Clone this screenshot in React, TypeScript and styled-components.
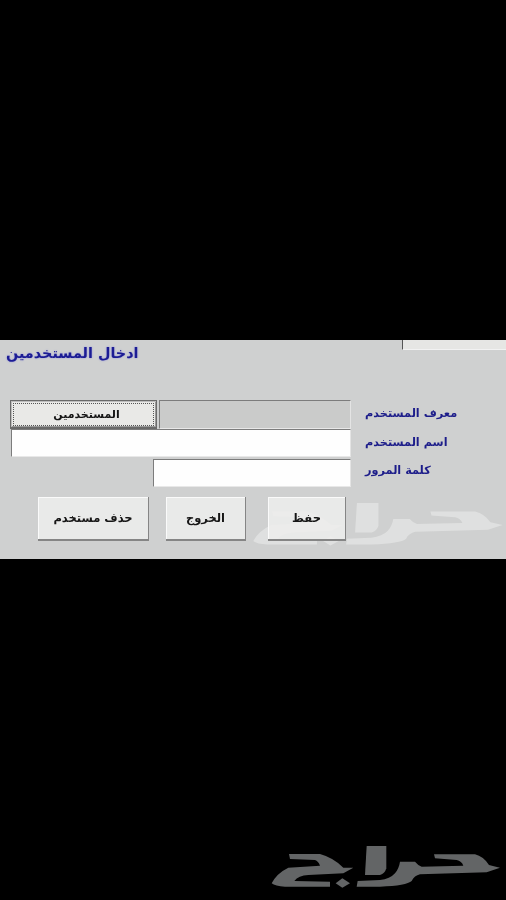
import React from "react";
import styled, { createGlobalStyle } from "styled-components";

const Global = createGlobalStyle`
  html, body { margin: 0; padding: 0; background: #000; }
  #root { width: 506px; height: 900px; overflow: hidden; }
`;

const Page = styled.div`
  position: relative;
  width: 506px;
  height: 900px;
  background: #000;
  display: flex;
  flex-direction: column;
  padding-top: 340px;
  box-sizing: border-box;
  font-family: "DejaVu Sans", "Noto Sans", sans-serif;
`;

const Panel = styled.section`
  position: relative;
  height: 219px;
  flex: none;
  background: #cfd0d0;
  box-sizing: border-box;
  overflow: hidden;
`;

const TopTab = styled.div`
  position: absolute;
  top: 0;
  right: 0;
  width: 104px;
  height: 10px;
  background: #e6e6e4;
  border-left: 1px solid #555;
  border-bottom: 1px solid #f2f2f2;
  box-sizing: border-box;
`;

const Title = styled.h1`
  margin: 0;
  height: 60px;
  box-sizing: border-box;
  padding: 3px 0 0 6px;
  direction: rtl;
  width: 140px;
  font-size: 14.4px;
  line-height: 21px;
  font-weight: 700;
  color: #1c1c94;
  white-space: nowrap;
  display: flex;
  justify-content: flex-end;
  text-shadow: 0 0 2px #8f90d8;
  filter: blur(0.4px);
`;

const Form = styled.div`
  display: grid;
  grid-template-columns: 351px 1fr;
  grid-template-rows: 29px 28px 30px;
`;

const FieldRow = styled.div<{ $indent: number; $top?: number }>`
  display: flex;
  padding-left: ${(p) => p.$indent}px;
  padding-top: ${(p) => p.$top ?? 0}px;
  gap: 2px;
  align-items: stretch;
`;

const UsersButton = styled.button`
  width: 147px;
  flex: none;
  padding: 0 0 0 6px;
  background: #e9e9e7;
  border: 1px solid #6a6a6a;
  border-bottom-width: 2px;
  outline: 1px dotted #555;
  outline-offset: -4px;
  box-shadow: inset 1px 1px 0 #bdbdbd, inset -1px -1px 0 #9a9a9a;
  font: 700 11px "DejaVu Sans", sans-serif;
  color: #141414;
  direction: rtl;
  filter: blur(0.3px);
`;

const TextField = styled.div<{ $disabled?: boolean }>`
  flex: 1;
  background: ${(p) => (p.$disabled ? "#cacbca" : "#fefefe")};
  border-top: 1px solid #7c7c7c;
  border-left: 1px solid #7c7c7c;
  border-right: 1px solid #e4e4e4;
  border-bottom: 1px solid #e8e8e8;
  box-sizing: border-box;
  filter: blur(0.3px);
`;

const Label = styled.label`
  padding: 4px 0 0 14px;
  direction: rtl;
  display: flex;
  justify-content: flex-end;
  width: fit-content;
  font-size: 11.3px;
  line-height: 20px;
  font-weight: 700;
  color: #1d1d8a;
  white-space: nowrap;
  filter: blur(0.35px);
`;

const Actions = styled.div`
  position: relative;
  z-index: 1;
  display: flex;
  margin-top: 10px;
  padding-left: 38px;
`;

const ActionButton = styled.button<{ $width: number; $after: number }>`
  width: ${(p) => p.$width}px;
  height: 44px;
  margin-right: ${(p) => p.$after}px;
  padding: 0;
  flex: none;
  background: rgba(238, 238, 236, 0.86);
  border: 0;
  border-right: 1px solid #858585;
  border-bottom: 2px solid #858585;
  box-shadow: inset 1px 1px 0 #fafafa;
  font: 700 11.5px "DejaVu Sans", sans-serif;
  color: #161616;
  direction: rtl;
  filter: blur(0.3px);
`;

const Watermark = styled.svg`
  position: absolute;
  left: 246px;
  top: 162px;
  width: 263px;
  height: 56px;
  opacity: 0.5;
  fill: #f0f1f0;
  filter: blur(0.7px);
  pointer-events: none;
`;

const FooterLogo = styled.svg`
  position: absolute;
  left: 265px;
  top: 845px;
  width: 241px;
  height: 55px;
  fill: #636566;
  filter: blur(0.4px);
`;

const LogoShapes = () => (
  <>
    <path d="M507 28 L630 28 Q655 34 672 60 L705 68 L665 82 L465 88 Q448 92 440 108 Q425 122 345 125 L275 125 L278 108 L345 105 Q375 102 390 85 Q402 70 405 50 L450 50 Q458 60 470 65 L595 62 Q590 48 575 45 L510 40 Z" />
    <path d="M305 3 L364 3 L364 70 Q360 85 345 90 L300 90 Z" />
    <path d="M72 27 L165 27 Q205 38 235 68 L265 68 L235 85 L130 90 Q100 92 88 108 L195 110 L195 125 L60 125 Q30 124 20 115 Q35 85 70 68 L165 62 Q160 48 150 45 L75 42 Z" />
    <path d="M212 115 L232 100 L255 115 L232 128 Z" />
  </>
);

export default function App() {
  return (
    <Page>
      <Global />
      <Panel>
        <TopTab />
        <Title>ادخال المستخدمين</Title>
        <Form>
          <FieldRow $indent={10}>
            <UsersButton type="button">المستخدمين</UsersButton>
            <TextField $disabled />
          </FieldRow>
          <Label>معرف المستخدم</Label>
          <FieldRow $indent={11}>
            <TextField />
          </FieldRow>
          <Label>اسم المستخدم</Label>
          <FieldRow $indent={153} $top={2}>
            <TextField />
          </FieldRow>
          <Label>كلمة المرور</Label>
        </Form>
        <Actions>
          <ActionButton type="button" $width={111} $after={17}>حذف مستخدم</ActionButton>
          <ActionButton type="button" $width={80} $after={22}>الخروج</ActionButton>
          <ActionButton type="button" $width={78} $after={0}>حفظ</ActionButton>
        </Actions>
        <Watermark viewBox="0 0 723 165" preserveAspectRatio="none">
          <LogoShapes />
        </Watermark>
      </Panel>
      <FooterLogo viewBox="0 0 723 165">
        <LogoShapes />
      </FooterLogo>
    </Page>
  );
}
